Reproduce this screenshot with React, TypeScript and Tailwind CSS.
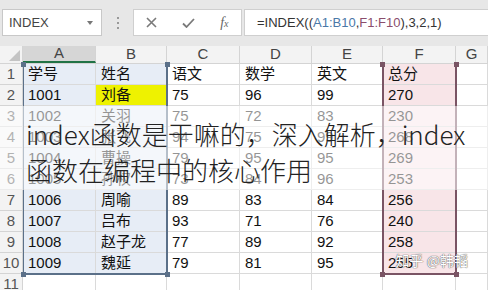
import React from "react";

type Row = string[];

const COLS = ["A", "B", "C", "D", "E", "F", "G"];
const COL_W = ["w-[73px]", "w-[71px]", "w-[73px]", "w-[72px]", "w-[71px]", "w-[73px]", "flex-1"];

const ROWS: Row[] = [
  ["学号", "姓名", "语文", "数学", "英文", "总分"],
  ["1001", "刘备", "75", "96", "99", "270"],
  ["1002", "关羽", "75", "72", "83", "230"],
  ["1003", "张飞", "94", "75", "99", "268"],
  ["1004", "曹操", "79", "95", "95", "269"],
  ["1005", "孙权", "73", "84", "96", "253"],
  ["1006", "周喻", "89", "83", "84", "256"],
  ["1007", "吕布", "93", "71", "76", "240"],
  ["1008", "赵子龙", "77", "89", "92", "258"],
  ["1009", "魏延", "79", "81", "95", "255"],
  ["", "", "", "", "", ""],
];

const cellBg = (r: number, c: number) => {
  if (r === 1 && c === 1) return "bg-[#eef200]";
  if (r < 10 && c <= 1) return "bg-[#e7edf6]";
  if (r < 10 && c === 5) return "bg-[#f8e5e8]";
  return "bg-white";
};

const Handle = ({ pos, color }: { pos: string; color: string }) => (
  <div className={`absolute w-[5px] h-[5px] ${pos} ${color}`} />
);

const App = () => {
  return (
    <div className="relative w-[488px] h-[290px] overflow-hidden bg-white font-['Liberation_Sans','Noto_Sans_CJK_SC',sans-serif]">
      {/* formula bar */}
      <div className="h-[46px] bg-[#e7e7e7] flex items-start pt-[9px]">
        <div className="ml-[2px] w-[100px] h-[27px] bg-white border border-[#c8c8c8] flex items-center justify-between pl-[6px] pr-[8px] text-[13px] text-[#444]">
          <span>INDEX</span>
          <span className="w-0 h-0 border-l-[3px] border-r-[3px] border-t-[4px] border-l-transparent border-r-transparent border-t-[#777]" />
        </div>
        <div className="w-[31px] h-[27px] flex flex-col items-center justify-center gap-[3px]">
          <span className="w-[2px] h-[2px] bg-[#999]" />
          <span className="w-[2px] h-[2px] bg-[#999]" />
          <span className="w-[2px] h-[2px] bg-[#999]" />
        </div>
        <div className="w-[109px] h-[27px] bg-white border border-[#cfcfcf] flex items-center justify-around">
          <svg width="11" height="11" viewBox="0 0 11 11">
            <path d="M1 1L10 10M10 1L1 10" stroke="#7a7a7a" strokeWidth="1.6" />
          </svg>
          <svg width="13" height="10" viewBox="0 0 13 10">
            <path d="M1 5.5L4.5 9L12 1" stroke="#7a7a7a" strokeWidth="1.8" fill="none" />
          </svg>
          <span className="font-['Liberation_Serif',serif] italic text-[14px] text-[#666]">
            f<span className="text-[10px]">x</span>
          </span>
        </div>
        <div className="ml-[2px] flex-1 h-[27px] bg-white border-l border-y border-[#cfcfcf] flex items-center pl-[12px] text-[13px] text-[#333]">
          <span>=INDEX((</span>
          <span className="text-[#4a78a8]">A1:B10</span>
          <span>,</span>
          <span className="text-[#8a4d6c]">F1:F10</span>
          <span>),3,2,1)</span>
        </div>
      </div>

      {/* sheet */}
      <div className="relative">
        <div className="flex h-[18px] bg-[#f3f3f3] border-b border-[#d4d4d4]">
          <div className="w-[23px] border-r border-[#d4d4d4] flex items-end justify-end p-[2px]">
            <svg width="11" height="11" viewBox="0 0 11 11">
              <path d="M11 0L11 11L0 11Z" fill="#c4c4c4" />
            </svg>
          </div>
          {COLS.map((c, i) => (
            <div
              key={c}
              className={`${COL_W[i]} flex items-center justify-center text-[15px] text-[#444] border-r border-[#d4d4d4] ${
                i === 0 ? "bg-[#d6d6d6] border-b-2 border-b-[#217346]" : ""
              }`}
            >
              {c}
            </div>
          ))}
        </div>

        {ROWS.map((row, r) => (
          <div key={r} className="flex h-[21px]">
            <div className="w-[23px] bg-[#f3f3f3] border-r border-b border-[#d4d4d4] flex items-center justify-center text-[15px] text-[#555]">
              {r + 1}
            </div>
            {COLS.map((_, c) => (
              <div
                key={c}
                className={`${COL_W[c]} ${cellBg(r, c)} border-r border-b border-[#dadada] flex items-center pl-[5px] text-[15px] text-[#111] whitespace-nowrap`}
              >
                {row[c] ?? ""}
              </div>
            ))}
          </div>
        ))}

        {/* range outlines */}
        <div className="absolute left-[23px] top-[18px] w-[145px] h-[211px] border-r-2 border-b-2 border-l border-[#5b7089] pointer-events-none">
          <Handle pos="-left-[3px] -top-[2px]" color="bg-[#5b7089]" />
          <Handle pos="-right-[4px] -top-[2px]" color="bg-[#5b7089]" />
          <Handle pos="-left-[3px] -bottom-[4px]" color="bg-[#5b7089]" />
          <Handle pos="-right-[4px] -bottom-[4px]" color="bg-[#5b7089]" />
        </div>
        <div className="absolute left-[382px] top-[18px] w-[75px] h-[211px] border-x-2 border-b-2 border-[#7a5464] pointer-events-none">
          <Handle pos="-left-[4px] -top-[2px]" color="bg-[#7a5464]" />
          <Handle pos="-right-[4px] -top-[2px]" color="bg-[#7a5464]" />
          <Handle pos="-left-[4px] -bottom-[4px]" color="bg-[#7a5464]" />
          <Handle pos="-right-[4px] -bottom-[4px]" color="bg-[#7a5464]" />
        </div>
      </div>

      {/* title overlay */}
      <div className="absolute left-0 top-[106px] w-full h-[84px] bg-white/55 pt-[10px] pl-[26px] font-['Noto_Sans_CJK_SC',sans-serif] font-light text-[26px] leading-[36px] text-[#222]">
        <div className="whitespace-nowrap">index函数是干嘛的，深入解析，index</div>
        <div className="whitespace-nowrap">函数在编程中的核心作用</div>
      </div>

      {/* watermark */}
      <div className="absolute right-[20px] bottom-[19px] text-[14px] text-white font-['Noto_Sans_CJK_SC',sans-serif] [text-shadow:0_0_1px_#555,0_0_1px_#555]">
        知乎 @韩韬
      </div>
    </div>
  );
};

export default App;
